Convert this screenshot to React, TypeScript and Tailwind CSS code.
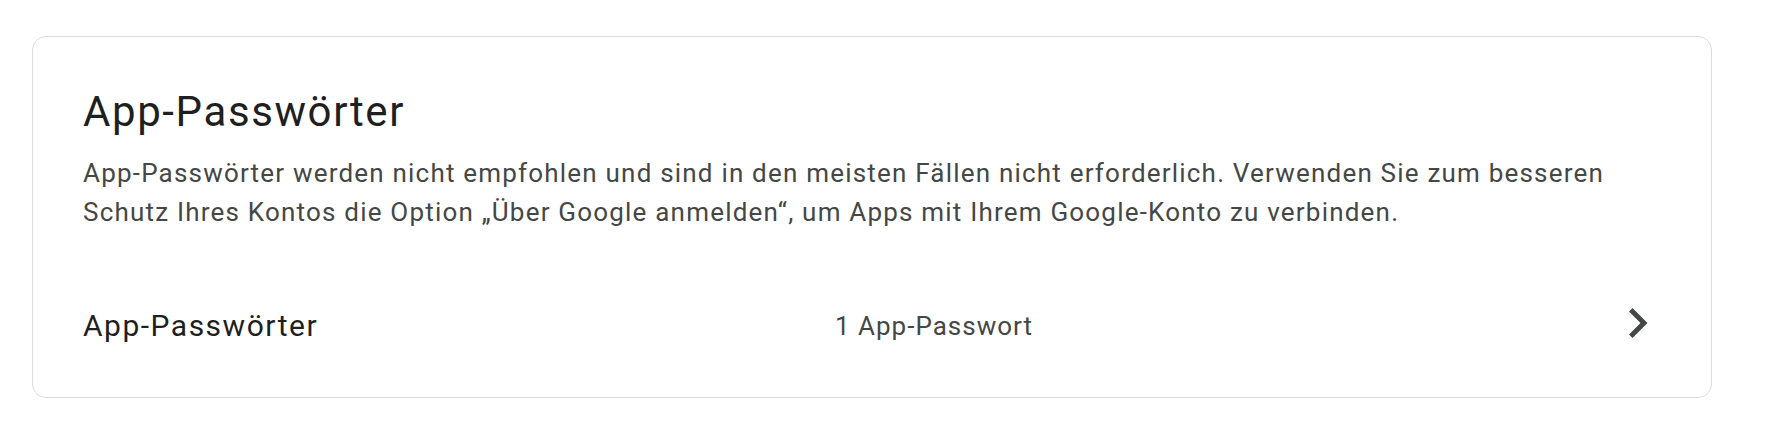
import React from 'react';

const ChevronRight: React.FC = () => (
  <svg width="60" height="60" viewBox="0 -960 960 960" fill="#444746" className="-translate-y-[3px]">
    <path d="M504-480 320-664l56-56 240 240-240 240-56-56 184-184Z" />
  </svg>
);

const App: React.FC = () => {
  return (
    <div className="w-[1766px] h-[424px] bg-white pt-[36px] pl-[32px]" style={{ fontFamily: 'Roboto, "Noto Sans", sans-serif' }}>
      <div className="w-[1680px] h-[362px] border border-[#dadce0] rounded-[14px] pl-[50px] pr-[42px] pt-[49px]">
        <h2 className="text-[42px] leading-[52px] text-[#1f1f1f] tracking-[1.6px]">App-Passwörter</h2>
        <p className="mt-[16px] text-[26px] leading-[39px] text-[#444746] tracking-[1.2px]">
          App-Passwörter werden nicht empfohlen und sind in den meisten Fällen nicht erforderlich. Verwenden Sie zum besseren
          <br />
          Schutz Ihres Kontos die Option „Über Google anmelden“, um Apps mit Ihrem Google-Konto zu verbinden.
        </p>
        <div className="mt-[64px] h-[60px] flex items-center">
          <div className="w-[752px] text-[30px] leading-[36px] text-[#1f1f1f] tracking-[1.5px]">App-Passwörter</div>
          <div className="flex-1 text-[26px] leading-[36px] text-[#444746] tracking-[1px]">1 App-Passwort</div>
          <ChevronRight />
        </div>
      </div>
    </div>
  );
};

export default App;
